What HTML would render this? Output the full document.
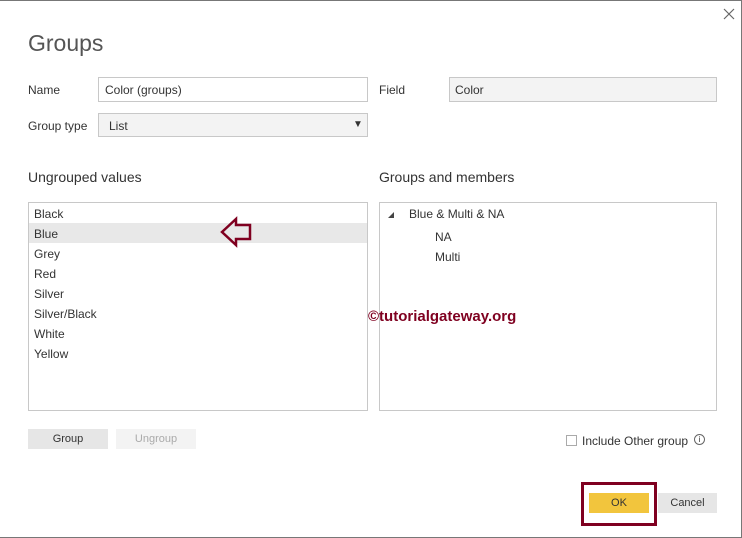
<!DOCTYPE html>
<html><head><meta charset="utf-8"><style>
*{margin:0;padding:0;box-sizing:border-box}
body{width:742px;height:538px;background:#fff;font-family:"Liberation Sans",sans-serif;color:#333;position:relative;overflow:hidden;font-size:12px}
.a{position:absolute;white-space:nowrap}
.frame{position:absolute;left:-2px;top:0;width:744px;height:538px;border:1px solid #777;border-left:none}
.box{position:absolute;border:1px solid #c8c8c8;background:#fff}
.lbl{font-size:12px;color:#333}
</style></head><body>
<div class="frame"></div>
<svg class="a" style="left:723px;top:8px" width="12" height="12"><path d="M1 1 L11 11 M11 1 L1 11" stroke="#666" stroke-width="1.2"/></svg>
<div class="a" style="left:28px;top:30px;font-size:23px;color:#555">Groups</div>
<div class="a lbl" style="left:28px;top:83px">Name</div>
<div class="box" style="left:98px;top:77px;width:270px;height:25px"><span class="a" style="left:6px;top:5px">Color (groups)</span></div>
<div class="a lbl" style="left:28px;top:119px">Group type</div>
<div class="box" style="left:98px;top:113px;width:270px;height:24px;background:#f3f3f3"><span class="a" style="left:10px;top:5px">List</span><span class="a" style="left:254px;top:5px;font-size:10px">▼</span></div>
<div class="a lbl" style="left:379px;top:83px">Field</div>
<div class="box" style="left:449px;top:77px;width:268px;height:25px;background:#f3f3f3"><span class="a" style="left:5px;top:5px">Color</span></div>
<div class="a" style="left:28px;top:169px;font-size:14px">Ungrouped values</div>
<div class="a" style="left:379px;top:169px;font-size:14px">Groups and members</div>
<div class="box" style="left:28px;top:202px;width:340px;height:209px">
<div style="position:absolute;left:0;top:20px;width:338px;height:20px;background:#e8e8e8"></div>
<div class="a" style="left:5px;top:1px;line-height:20px">Black<br>Blue<br>Grey<br>Red<br>Silver<br>Silver/Black<br>White<br>Yellow</div>
</div>
<svg class="a" style="left:219px;top:216px" width="34" height="32"><path d="M3 16 L17 3 L17 9 L31 9 L31 23 L17 23 L17 29 Z" fill="none" stroke="#7f0020" stroke-width="2.5"/></svg>
<div class="box" style="left:379px;top:202px;width:338px;height:209px">
<svg class="a" style="left:7px;top:8px" width="8" height="8"><path d="M1 7 L7 7 L7 1 Z" fill="#444"/></svg>
<div class="a" style="left:29px;top:4px">Blue &amp; Multi &amp; NA</div>
<div class="a" style="left:55px;top:24px;line-height:20px">NA<br>Multi</div>
</div>
<div class="a" style="left:368px;top:308px;font-size:15px;font-weight:bold;color:#7f0020">©tutorialgateway.org</div>
<div class="a" style="left:28px;top:429px;width:80px;height:20px;background:#e6e6e6;text-align:center;line-height:20px;font-size:11px">Group</div>
<div class="a" style="left:116px;top:429px;width:80px;height:20px;background:#f3f3f3;text-align:center;line-height:20px;font-size:11px;color:#aaa">Ungroup</div>
<div class="a" style="left:566px;top:435px;width:11px;height:11px;border:1px solid #aaa"></div>
<div class="a" style="left:582px;top:434px;font-size:12px">Include Other group</div>
<div class="a" style="left:694px;top:434px;width:11px;height:11px;border:1px solid #666;border-radius:50%;font-size:8px;line-height:9px;text-align:center">i</div>
<div class="a" style="left:581px;top:482px;width:76px;height:44px;border:3px solid #7f0020"></div>
<div class="a" style="left:589px;top:493px;width:60px;height:20px;background:#f2c53d;text-align:center;line-height:20px;font-size:11px">OK</div>
<div class="a" style="left:658px;top:493px;width:59px;height:20px;background:#e6e6e6;text-align:center;line-height:20px;font-size:11px">Cancel</div>
</body></html>
